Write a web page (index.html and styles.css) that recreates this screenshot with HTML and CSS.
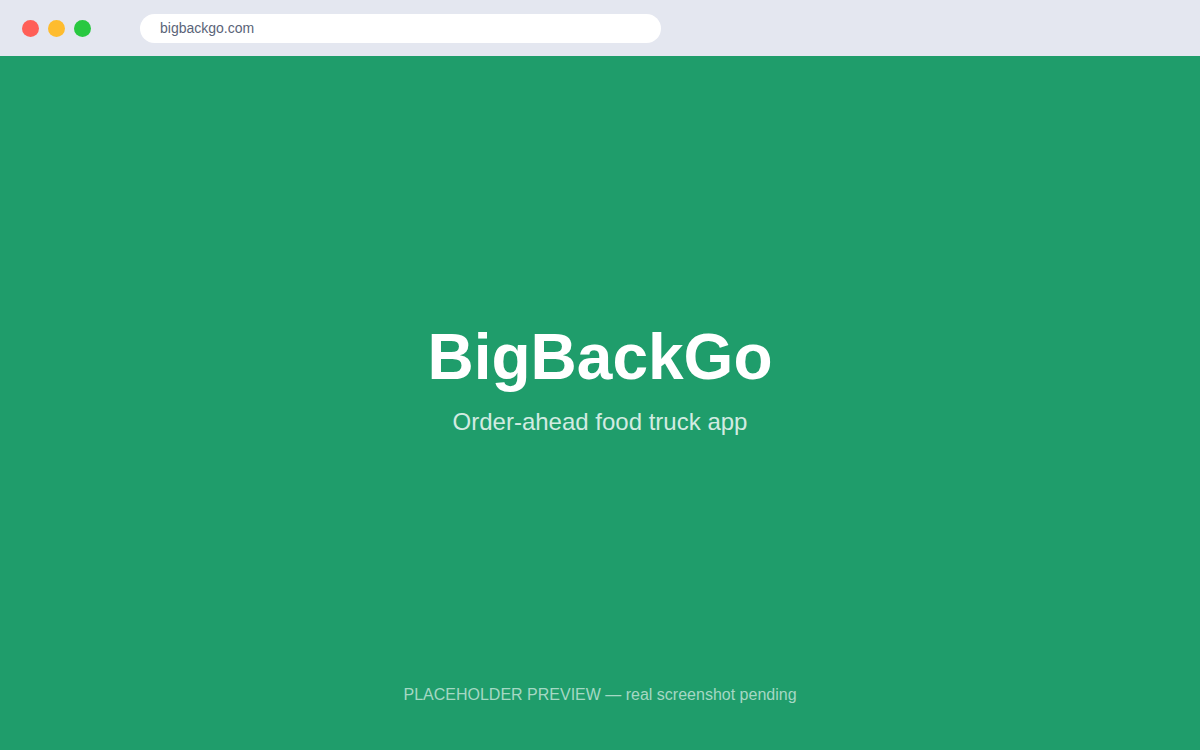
FILE: index.html
```html
<!DOCTYPE html>
<html lang="en">
<head>
    <meta charset="UTF-8">
    <meta name="viewport" content="width=device-width, initial-scale=1.0">
    <title>BigBackGo</title>
    <link rel="stylesheet" href="styles.css">
</head>
<body>
    <header class="browser-bar">
        <div class="dots">
            <span class="dot dot-red"></span>
            <span class="dot dot-yellow"></span>
            <span class="dot dot-green"></span>
        </div>
        <input class="address" type="text" value="bigbackgo.com" aria-label="Address">
    </header>

    <main class="preview">
        <div class="hero">
            <h1>BigBackGo</h1>
            <p class="tagline">Order-ahead food truck app</p>
        </div>
        <p class="note">PLACEHOLDER PREVIEW — real screenshot pending</p>
    </main>
</body>
</html>
```
FILE: styles.css
```css
* {
    box-sizing: border-box;
}
body {
    font-family: Helvetica, "Liberation Sans", Arial, sans-serif;
    margin: 0;
    min-height: 100vh;
    display: flex;
    flex-direction: column;
    background-color: #1f9d6b;
}
.browser-bar {
    display: flex;
    align-items: center;
    gap: 49px;
    height: 56px;
    padding: 0 22px;
    background-color: #e4e7f0;
}
.dots {
    display: flex;
    gap: 9px;
}
.dot {
    width: 17px;
    height: 17px;
    border-radius: 50%;
}
.dot-red {
    background-color: #ff5f57;
}
.dot-yellow {
    background-color: #febc2e;
}
.dot-green {
    background-color: #28c840;
}
.address {
    width: 521px;
    height: 29px;
    padding: 0 20px;
    border: none;
    border-radius: 15px;
    background-color: white;
    color: #5a6478;
    font-family: inherit;
    font-size: 14px;
}
.preview {
    flex: 1;
    display: flex;
    flex-direction: column;
    text-align: center;
}
.hero {
    flex: 1;
    display: flex;
    flex-direction: column;
    justify-content: center;
    padding-top: 20px;
}
h1 {
    margin: 0;
    color: white;
    font-size: 64px;
    line-height: 72px;
}
.tagline {
    margin: 13px 0 0;
    color: #d2ebe1;
    font-size: 24px;
    line-height: 32px;
}
.note {
    margin: 0;
    padding-bottom: 43px;
    color: #a5d8c4;
    font-size: 16px;
    line-height: 24px;
}
```
